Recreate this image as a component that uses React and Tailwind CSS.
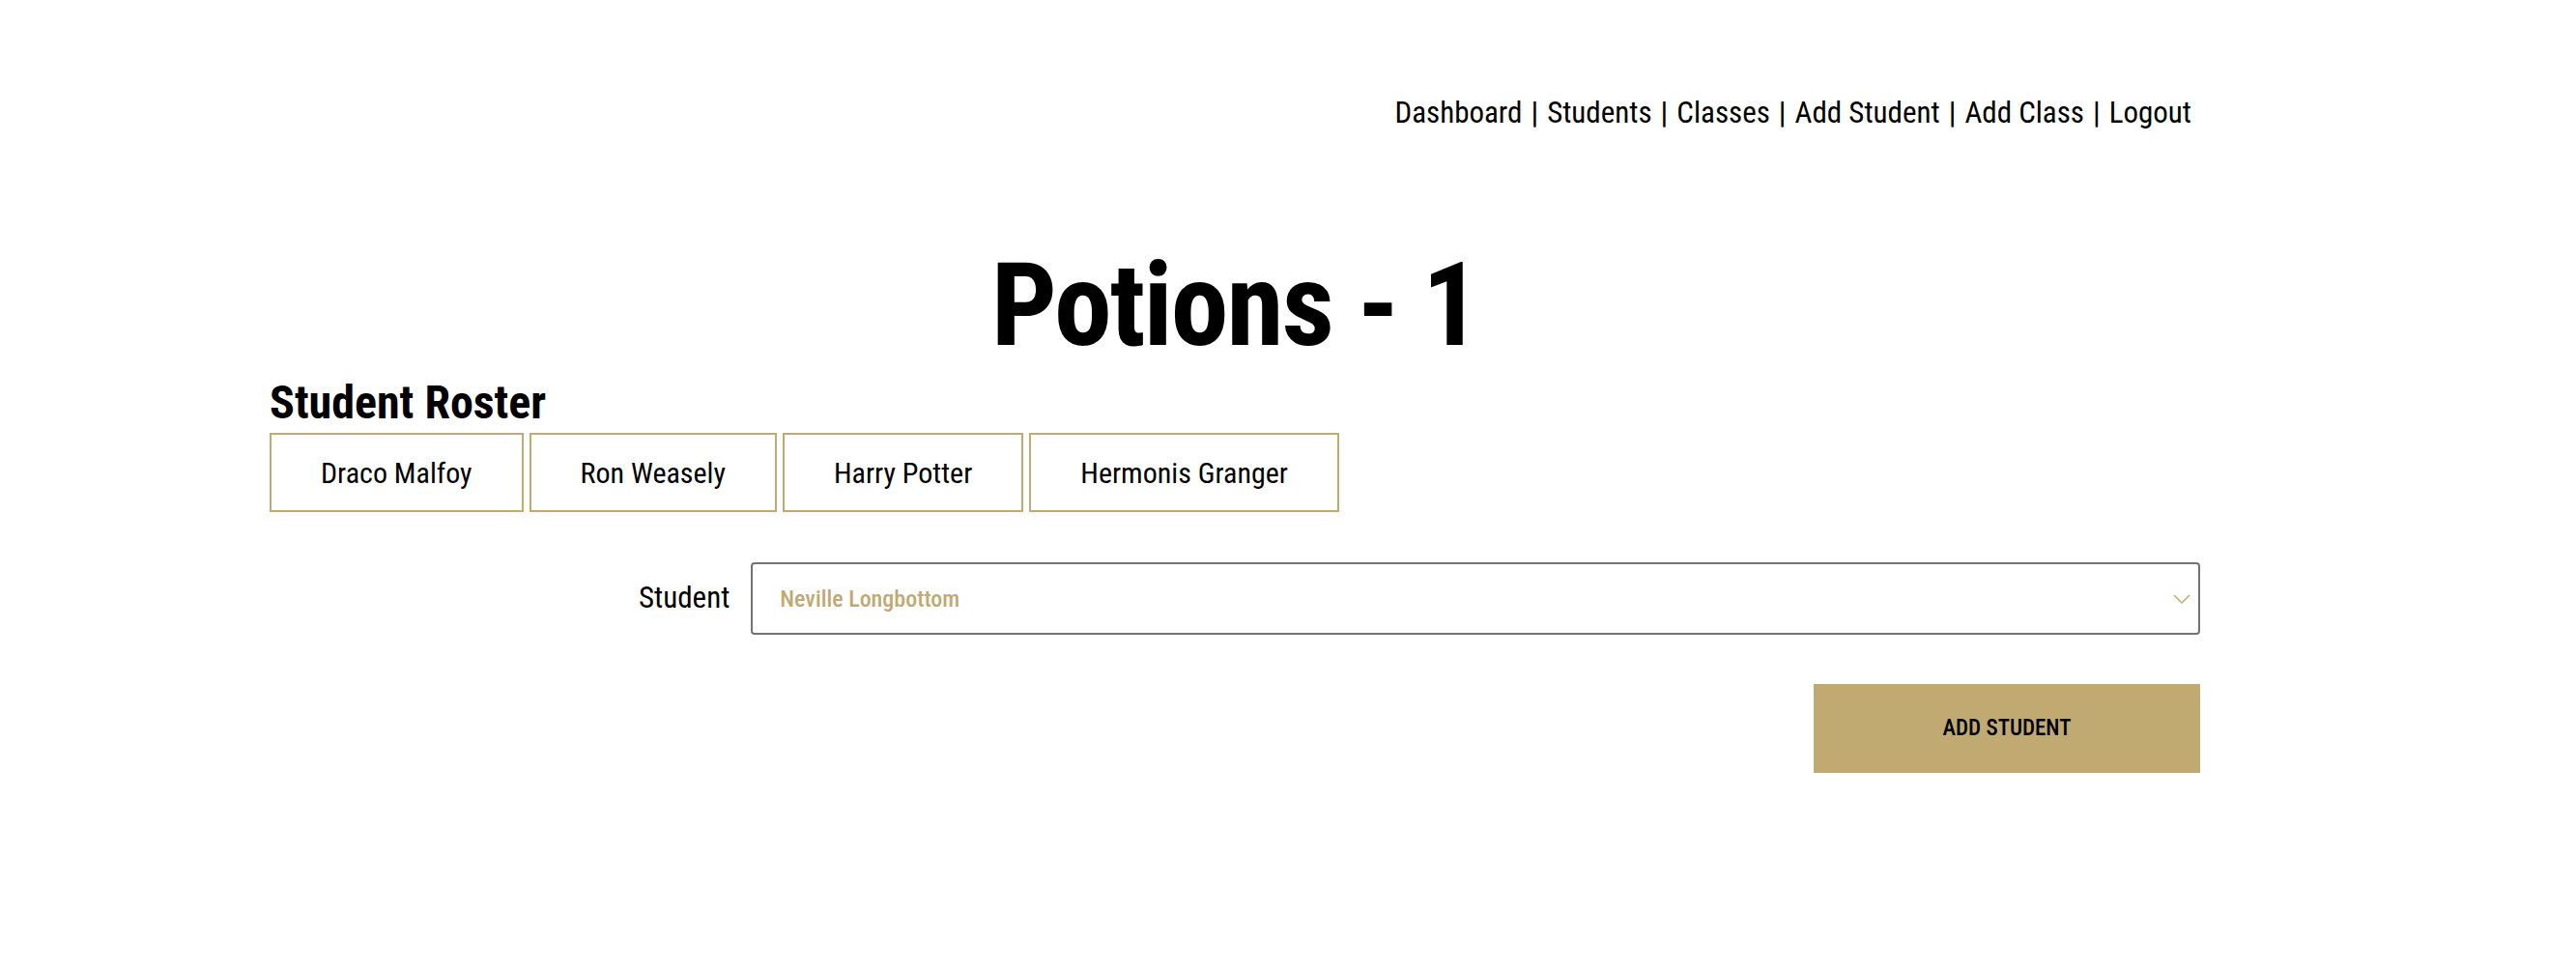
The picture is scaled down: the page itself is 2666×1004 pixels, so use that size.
import React from "react";

const roster = ["Draco Malfoy", "Ron Weasely", "Harry Potter", "Hermonis Granger"];
const links = ["Dashboard", "Students", "Classes", "Add Student", "Add Class", "Logout"];

export default function App() {
  return (
    <div className="min-h-screen bg-white text-black font-['Roboto_Condensed','Roboto',sans-serif]">
      <div className="ml-[279px] w-[1998px]">
        <nav className="flex justify-end pr-[9px] pt-[98px] text-[31px] leading-[38px]">
          {links.map((l, i) => (
            <span key={l} className="flex">
              {i > 0 && <span className="px-[9px] font-medium">|</span>}
              <a href="#" className="text-black">{l}</a>
            </span>
          ))}
        </nav>

        <h1 className="mt-[120px] text-center text-[120px] font-bold leading-[120px] tracking-[-2px]">
          Potions - 1
        </h1>

        <h2 className="mt-[15px] mb-[5px] text-[48px] font-bold leading-[52px]">Student Roster</h2>

        <div className="flex gap-[6px]">
          {roster.map((s) => (
            <div
              key={s}
              className="flex h-[82px] items-center border-2 border-[#c1a972] px-[51px] text-[30px]"
            >
              {s}
            </div>
          ))}
        </div>

        <div className="mt-[52px] flex items-center gap-[22px] pl-[382px]">
          <label className="text-[31px]">Student</label>
          <div className="relative flex-1">
            <select className="h-[75px] w-full appearance-none rounded-[4px] border-2 border-[#737373] bg-white pl-[28px] text-[24px] font-medium text-[#c1a972] outline-none">
              <option>Neville Longbottom</option>
            </select>
            <svg
              className="pointer-events-none absolute right-[10px] top-1/2 -translate-y-1/2"
              width="18"
              height="12"
              viewBox="0 0 18 12"
              fill="none"
              stroke="#c1a972"
              strokeWidth="1.5"
            >
              <path d="M1 2l8 8 8-8" />
            </svg>
          </div>
        </div>

        <div className="mt-[51px] flex justify-end">
          <button className="h-[92px] w-[400px] bg-[#c1a972] text-[23px] font-medium uppercase text-black">
            Add Student
          </button>
        </div>
      </div>
    </div>
  );
}
